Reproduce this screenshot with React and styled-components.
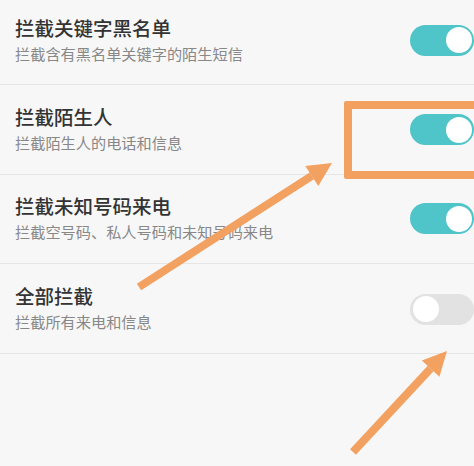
import React from 'react';
import styled, { createGlobalStyle } from 'styled-components';

const GlobalStyle = createGlobalStyle`
    html, body {
        margin: 0;
        padding: 0;
        background: #f7f7f7;
        font-family: "Noto Sans CJK SC", "Noto Sans", sans-serif;
    }
`;

const Screen = styled.div`
    position: relative;
    width: 474px;
    height: 466px;
    overflow: hidden;
    background: #f7f7f7;
`;

const List = styled.div`
    margin-top: -4px;
    display: flex;
    flex-direction: column;
`;

const Row = styled.div`
    height: 88.4px;
    display: flex;
    align-items: center;
    justify-content: space-between;
    padding-left: 15px;
    border-bottom: 1px solid #e6e6e6;
`;

const Texts = styled.div`
    display: flex;
    flex-direction: column;
    gap: 3px;
    margin-top: -2px;
`;

const Title = styled.span`
    font-size: 19.5px;
    font-weight: 500;
    line-height: 24px;
    color: #333;
`;

const Sub = styled.span`
    font-size: 15.2px;
    line-height: 20px;
    color: #888;
`;

const Track = styled.div`
    width: 64px;
    height: 31px;
    border-radius: 16px;
    box-sizing: border-box;
    padding: 2.5px;
    display: flex;
    justify-content: ${(p) => (p.on ? 'flex-end' : 'flex-start')};
    background: ${(p) => (p.on ? '#4fc4c9' : '#e2e2e2')};
    margin-top: ${(p) => p.shift || 0}px;
`;

const Knob = styled.div`
    width: 26px;
    height: 26px;
    border-radius: 50%;
    background: #fff;
`;

const Highlight = styled.div`
    position: absolute;
    left: 344px;
    top: 101px;
    width: 140px;
    height: 78px;
    box-sizing: border-box;
    border: 8px solid #f2a160;
    border-radius: 2px;
`;

const Overlay = styled.svg`
    position: absolute;
    left: 0;
    top: 0;
    pointer-events: none;
`;

const items = [
    { title: '拦截关键字黑名单', sub: '拦截含有黑名单关键字的陌生短信', on: true },
    { title: '拦截陌生人', sub: '拦截陌生人的电话和信息', on: true },
    { title: '拦截未知号码来电', sub: '拦截空号码、私人号码和未知号码来电', on: true },
    { title: '全部拦截', sub: '拦截所有来电和信息', on: false, shift: 2 },
];

const Arrow = ({ x1, y1, x2, y2 }) => {
    const a = Math.atan2(y2 - y1, x2 - x1);
    const len = 24;
    const half = 12;
    const bx = x2 - Math.cos(a) * len;
    const by = y2 - Math.sin(a) * len;
    const px = -Math.sin(a) * half;
    const py = Math.cos(a) * half;
    return (
        <g fill="#f2a160" stroke="#f2a160">
            <line x1={x1} y1={y1} x2={bx} y2={by} strokeWidth="8" />
            <polygon points={`${x2},${y2} ${bx + px},${by + py} ${bx - px},${by - py}`} stroke="none" />
        </g>
    );
};

const App = () => (
    <Screen>
        <GlobalStyle />
        <List>
            {items.map((it) => (
                <Row key={it.title}>
                    <Texts>
                        <Title>{it.title}</Title>
                        <Sub>{it.sub}</Sub>
                    </Texts>
                    <Track on={it.on} shift={it.shift}>
                        <Knob />
                    </Track>
                </Row>
            ))}
        </List>
        <Highlight />
        <Overlay width="474" height="466">
            <Arrow x1={139} y1={287} x2={332} y2={163} />
            <Arrow x1={353} y1={452} x2={447} y2={351} />
        </Overlay>
    </Screen>
);

export default App;
